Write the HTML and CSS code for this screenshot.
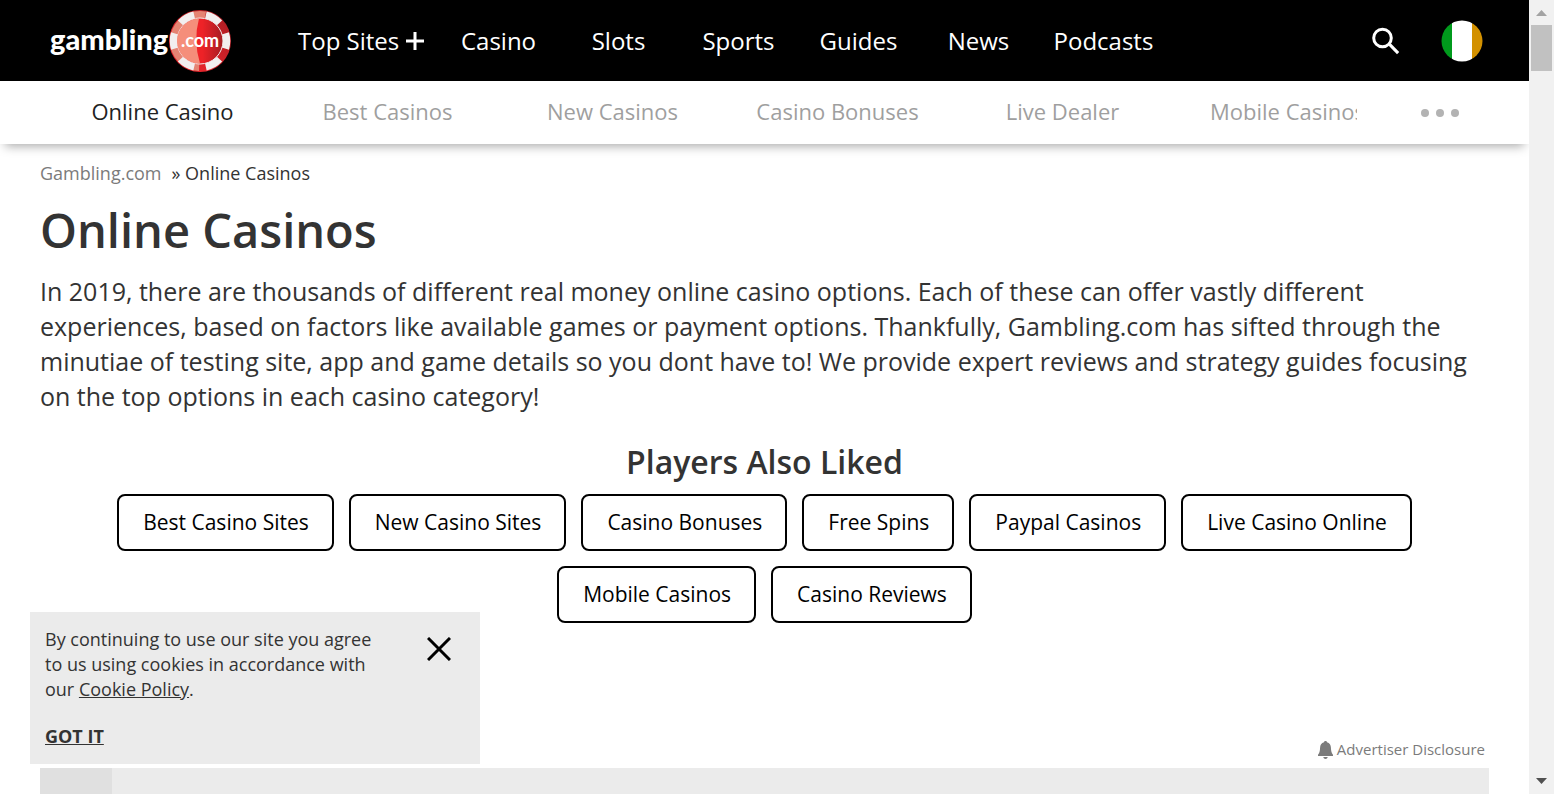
FILE: index.html
```html
<!DOCTYPE html>
<html lang="en">
<head>
<meta charset="utf-8">
<meta name="viewport" content="width=device-width, initial-scale=1">
<title>Online Casinos</title>
<link rel="stylesheet" href="styles.css">
</head>
<body>
<div class="page">
  <header class="site-header">
    <div class="topbar">
      <a class="logo" href="#" aria-label="gambling.com">
        <span class="logo-word">gambling</span>
        <svg class="logo-chip" viewBox="0 0 62 62" aria-hidden="true">
          <defs>
            <linearGradient id="chipRed" x1="0" x2="1"><stop offset=".55" stop-color="#ee2227"/><stop offset="1" stop-color="#a51c22"/></linearGradient>
            <linearGradient id="rim" x1="0" x2="1" y1="1" y2="0"><stop offset=".3" stop-color="#e3242b"/><stop offset="1" stop-color="#a51c22"/></linearGradient>
          </defs>
          <circle cx="31" cy="31" r="31" fill="url(#rim)"/>
          <circle cx="31" cy="31" r="26.500" fill="none" stroke="#e58473" stroke-width="7" pathLength="360" stroke-dasharray="190 170" stroke-dashoffset="-92"/>
          <circle cx="31" cy="31" r="26.500" fill="none" stroke="#f2efef" stroke-width="7.500" pathLength="360" stroke-dasharray="34 26" stroke-dashoffset="17"/>
          <circle cx="31" cy="31" r="23" fill="url(#chipRed)" stroke="#f2efef"/>
          <path d="M30 8.500a22.500 22.500 0 1 0 1 45Q24 31 30 8.500z" fill="#f58e7a"/>
          <text class="chip-text" x="31" y="37" text-anchor="middle">.com</text>
        </svg>
      </a>
      <nav class="main-nav" aria-label="Main">
        <a href="#">Top Sites <svg class="plus" viewBox="0 0 18 18" aria-hidden="true"><path d="M9 0v18M0 9h18" stroke="#fff" stroke-width="3"/></svg></a>
        <a href="#">Casino</a>
        <a href="#">Slots</a>
        <a href="#">Sports</a>
        <a href="#">Guides</a>
        <a href="#">News</a>
        <a href="#">Podcasts</a>
      </nav>
      <div class="tools">
        <button class="icon-button" type="button" aria-label="Search">
          <svg width="28" height="28" viewBox="0 0 28 28" aria-hidden="true"><circle cx="10.500" cy="11" r="8.800" fill="none" stroke="#fff" stroke-width="3"/><path d="M16.500 18.500l2.200-2.200 8.500 8.700-2.200 2.200z" fill="#fff"/></svg>
        </button>
        <button class="icon-button" type="button" aria-label="Country: Ireland">
          <svg width="42" height="42" viewBox="0 0 42 42" aria-hidden="true"><defs><clipPath id="flag"><circle cx="21" cy="21" r="20.500"/></clipPath></defs><g clip-path="url(#flag)"><path fill="#009a1c" d="M0 0h11v42H0z"/><path fill="#fff" d="M11 0h20v42H11z"/><path fill="#d39100" d="M31 0h11v42H31z"/></g></svg>
        </button>
      </div>
    </div>
    <div class="subbar">
      <nav class="sub-nav" aria-label="Casino">
        <a class="current" href="#">Online Casino</a>
        <a href="#">Best Casinos</a>
        <a href="#">New Casinos</a>
        <a href="#">Casino Bonuses</a>
        <a href="#">Live Dealer</a>
        <a href="#">Mobile Casinos</a>
      </nav>
      <button class="more" type="button" aria-label="More"><i></i><i></i><i></i></button>
    </div>
  </header>

  <main class="content">
    <nav class="crumbs" aria-label="Breadcrumb"><a href="#">Gambling.com</a><span>» Online Casinos</span></nav>
    <h1>Online Casinos</h1>
    <p class="intro">In 2019, there are thousands of different real money online casino options. Each of these can offer vastly different experiences, based on factors like available games or payment options. Thankfully, Gambling.com has sifted through the minutiae of testing site, app and game details so you dont have to! We provide expert reviews and strategy guides focusing on the top options in each casino category!</p>
    <section class="liked">
      <h2>Players Also Liked</h2>
      <div class="pills">
        <a href="#">Best Casino Sites</a>
        <a href="#">New Casino Sites</a>
        <a href="#">Casino Bonuses</a>
        <a href="#">Free Spins</a>
        <a href="#">Paypal Casinos</a>
        <a href="#">Live Casino Online</a>
        <a href="#">Mobile Casinos</a>
        <a href="#">Casino Reviews</a>
      </div>
    </section>
    <a class="disclosure" href="#">
      <svg width="15" height="18" viewBox="0 0 15 18" aria-hidden="true"><path d="M7.500 0c1 0 1.500.6 1.500 1.300 2.700.7 3.800 2.700 3.900 5.200.1 4 .8 5.500 2.100 7.200V15H0v-1.300c1.300-1.700 2-3.200 2.100-7.200.1-2.500 1.200-4.500 3.900-5.200C6 .6 6.500 0 7.500 0zM5.200 16h4.600q-.5 2-2.300 2t-2.300-2z" fill="#7b7b7b"/></svg>
      Advertiser Disclosure
    </a>
    <div class="table-head"><span></span></div>
  </main>
</div>

<div class="scrollbar" aria-hidden="true">
  <svg width="11" height="6" viewBox="0 0 11 6"><path d="M0 6l5.500-6L11 6z" fill="#a3a3a3"/></svg>
  <span class="thumb"></span>
  <svg width="11" height="6" viewBox="0 0 11 6"><path d="M0 0h11L5.500 6z" fill="#505050"/></svg>
</div>

<aside class="cookie" aria-label="Cookie notice">
  <div class="cookie-text">
    <p>By continuing to use our site you agree to us using cookies in accordance with our <a href="#">Cookie Policy</a>.</p>
    <button class="got-it" type="button">GOT IT</button>
  </div>
  <button class="icon-button" type="button" aria-label="Close">
    <svg width="24" height="24" viewBox="0 0 24 24" aria-hidden="true"><path d="M1 1l22 22M23 1L1 23" stroke="#000" stroke-width="3"/></svg>
  </button>
</aside>
</body>
</html>
```
FILE: styles.css
```css
* {
  box-sizing: border-box;
}

body {
  display: flex;
  height: 100vh;
  margin: 0;
  overflow: hidden;
  background: #fff;
  color: #333;
  font-family: "Open Sans", "Noto Sans", sans-serif;
}

a {
  color: inherit;
  text-decoration: none;
}

button {
  padding: 0;
  border: 0;
  background: none;
  color: inherit;
  font: inherit;
  cursor: pointer;
}

.page {
  flex: 1;
  min-width: 0;
  overflow: hidden;
}

.site-header {
  position: relative;
  background: #fff;
  box-shadow: 0 7px 10px -5px rgba(0, 0, 0, 0.35);
}

.topbar {
  display: flex;
  align-items: center;
  height: 81px;
  padding: 0 46px 0 50px;
  background: #000;
  color: #fff;
}

.logo {
  display: flex;
  flex: none;
  align-items: center;
  width: 233px;
}

.logo-word {
  width: 119px;
  padding-bottom: 4px;
  font-family: Lato, sans-serif;
  font-size: 29px;
  font-weight: 900;
  line-height: 36px;
}

.logo-chip {
  width: 62px;
  height: 62px;
}

.chip-text {
  fill: #fff;
  font-family: Lato, sans-serif;
  font-size: 18px;
  font-weight: 700;
}

.main-nav {
  display: flex;
  flex: 1;
}

.main-nav a {
  min-width: 120px;
  padding: 0 15px;
  font-size: 24px;
  line-height: 34px;
  text-align: center;
  white-space: nowrap;
}

.plus {
  width: 18px;
  height: 18px;
}

.tools {
  display: flex;
  align-items: center;
  gap: 41px;
}

.icon-button {
  display: flex;
}

.subbar {
  display: flex;
  align-items: center;
  height: 63px;
  padding-left: 50px;
}

.sub-nav {
  display: flex;
  flex: 1;
  min-width: 0;
  padding-bottom: 3px;
  overflow: hidden;
}

.sub-nav a {
  flex: 0 0 225px;
  color: #9f9f9f;
  font-size: 22px;
  line-height: 30px;
  text-align: center;
}

.sub-nav .current {
  color: #222;
}

.more {
  display: flex;
  gap: 7px;
  justify-content: center;
  width: 172px;
  padding-right: 7px;
}

.more i {
  width: 8px;
  height: 8px;
  border-radius: 50%;
  background: #b3b3b3;
}

.content {
  padding: 16px 40px 0;
}

.crumbs {
  display: flex;
  gap: 10px;
  font-size: 18px;
  line-height: 26px;
}

.crumbs a {
  color: #7b7b7b;
}

h1 {
  margin: 10px 0;
  font-size: 47px;
  font-weight: 600;
  line-height: 68px;
}

.intro {
  margin: 0;
  font-size: 25px;
  line-height: 35px;
}

.liked {
  padding-top: 26px;
}

h2 {
  margin: 0 0 10px;
  font-size: 32px;
  font-weight: 600;
  line-height: 44px;
  text-align: center;
}

.pills {
  display: flex;
  flex-wrap: wrap;
  gap: 15px;
  justify-content: center;
  padding: 0 60px;
}

.pills a {
  padding: 12px 23px 13px 24px;
  border: 2px solid #000;
  border-radius: 8px;
  color: #000;
  font-size: 21px;
  line-height: 28px;
}

.disclosure {
  display: flex;
  gap: 4px;
  align-items: center;
  justify-content: flex-end;
  margin: 116px 4px 8px 0;
  color: #7b7b7b;
  font-size: 15px;
  line-height: 21px;
}

.table-head {
  height: 80px;
  background: #ebebeb;
}

.table-head span {
  display: block;
  width: 72px;
  height: 100%;
  background: #e0e0e0;
}

.scrollbar {
  display: flex;
  flex: 0 0 25px;
  flex-direction: column;
  align-items: center;
  padding: 10px 0;
  background: #f1f1f1;
}

.thumb {
  width: 21px;
  height: 46px;
  margin: 9px 0 auto;
  background: #c1c1c1;
}

.cookie {
  position: fixed;
  bottom: 30px;
  left: 30px;
  display: flex;
  gap: 42px;
  align-items: flex-start;
  width: 450px;
  padding: 15px;
  background: #ebebeb;
  font-size: 18px;
  line-height: 25px;
}

.cookie-text {
  width: 340px;
}

.cookie p {
  margin: 0 0 22px;
}

.cookie p a,
.got-it {
  text-decoration: underline;
}

.got-it {
  display: block;
  font-weight: 700;
}

.cookie .icon-button {
  padding-top: 10px;
}
```
